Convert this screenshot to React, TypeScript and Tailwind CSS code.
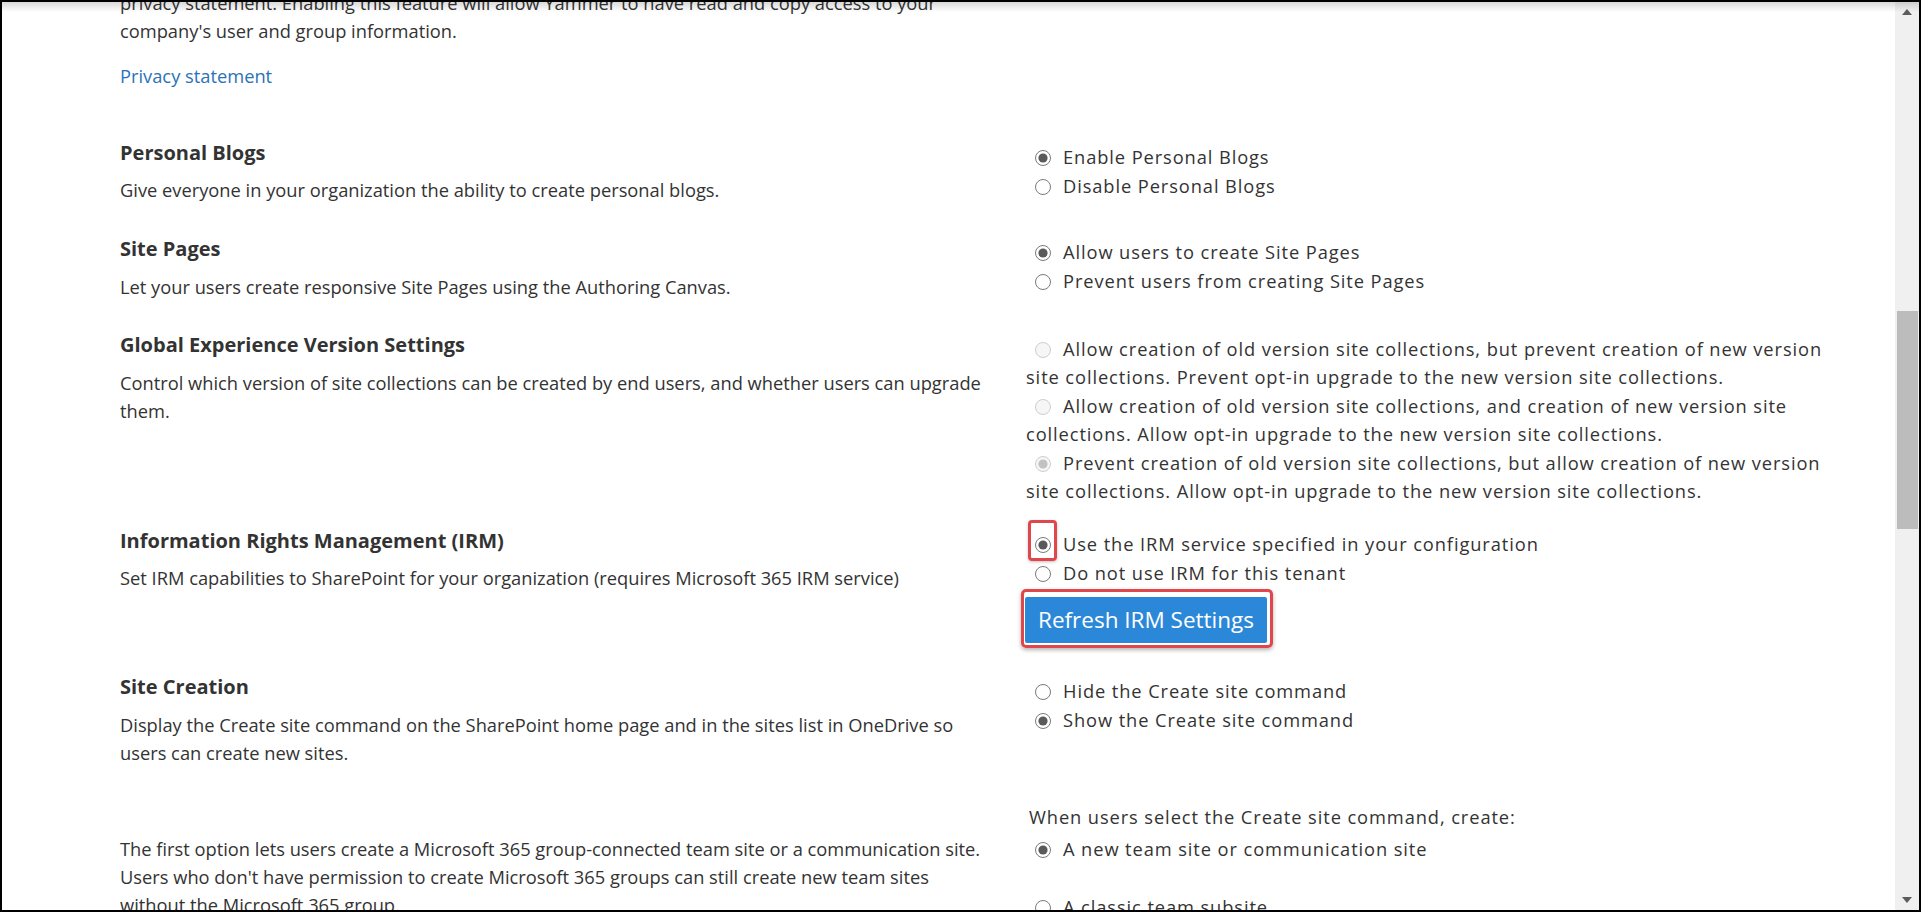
import React from "react";

type RState = "on" | "off" | "don" | "doff";

function Radio({ s }: { s: RState }) {
  const disabled = s === "don" || s === "doff";
  const checked = s === "on" || s === "don";
  return (
    <svg
      width="16"
      height="16"
      viewBox="0 0 16 16"
      className="inline-block align-[-2px]"
    >
      <circle
        cx="8"
        cy="8"
        r="7.5"
        fill={disabled ? "#f6f6f6" : "#ffffff"}
        stroke={disabled ? "#cdcdcd" : "#7a7a7a"}
        strokeWidth="1"
      />
      {checked && <circle cx="8" cy="8" r="4.6" fill={disabled ? "#c2c2c2" : "#5a5a5a"} />}
    </svg>
  );
}

function RadioSlot({ s, boxed }: { s: RState; boxed?: boolean }) {
  return (
    <span className="relative inline-block ml-[9px] mr-[12px] tracking-normal">
      <Radio s={s} />
      {boxed && (
        <span className="absolute top-[-10px] bottom-[-3px] left-[-7px] right-[-6px] border-[3px] border-[#e0474c] rounded-[4px] shadow-[0_1px_3px_rgba(0,0,0,0.25)]" />
      )}
    </span>
  );
}

function Item({ s, children, className, boxed }: { s: RState; children: React.ReactNode; className?: string; boxed?: boolean }) {
  return (
    <div className={"whitespace-nowrap " + (className ?? "")}>
      <RadioSlot s={s} boxed={boxed} />
      {children}
    </div>
  );
}

function Heading({ children }: { children: React.ReactNode }) {
  return <div className="font-bold text-[20px] leading-[28px] text-[#333333]">{children}</div>;
}

export default function App() {
  return (
    <div className="relative w-[1921px] h-[912px] border-2 border-black bg-white overflow-hidden flex font-['Open_Sans',sans-serif] text-[#333333]">
      <div className="flex-1 overflow-hidden">
        <div className="mt-[-13px] pl-[118px] text-[18.3px] leading-[28px]">
          {/* top fragment */}
          <div className="w-[906px] whitespace-nowrap">
            <div>privacy statement. Enabling this feature will allow Yammer to have read and copy access to your</div>
            <div>company's user and group information.</div>
            <div className="mt-[17px] text-[#2b72b8]">Privacy statement</div>
          </div>

          {/* Personal Blogs */}
          <div className="mt-[49px] flex">
            <div className="w-[906px] shrink-0 whitespace-nowrap">
              <Heading>Personal Blogs</Heading>
              <div className="mt-[9px]">Give everyone in your organization the ability to create personal blogs.</div>
            </div>
            <div className="pt-[4px] tracking-[0.9px]">
              <Item s="on">Enable Personal Blogs</Item>
              <Item s="off" className="mt-[1px]">Disable Personal Blogs</Item>
            </div>
          </div>

          {/* Site Pages */}
          <div className="mt-[31px] flex">
            <div className="w-[906px] shrink-0 whitespace-nowrap">
              <Heading>Site Pages</Heading>
              <div className="mt-[10px]">Let your users create responsive Site Pages using the Authoring Canvas.</div>
            </div>
            <div className="pt-[3px] tracking-[0.9px]">
              <Item s="on">Allow users to create Site Pages</Item>
              <Item s="off" className="mt-[1px]">Prevent users from creating Site Pages</Item>
            </div>
          </div>

          {/* Global Experience */}
          <div className="mt-[30px] flex">
            <div className="w-[906px] shrink-0 whitespace-nowrap">
              <Heading>Global Experience Version Settings</Heading>
              <div className="mt-[10px]">
                Control which version of site collections can be created by end users, and whether users can upgrade
                <br />
                them.
              </div>
            </div>
            <div className="pt-[4px] tracking-[0.9px]">
              <Item s="doff">
                Allow creation of old version site collections, but prevent creation of new version
                <br />
                site collections. Prevent opt-in upgrade to the new version site collections.
              </Item>
              <Item s="doff" className="mt-[1px]">
                Allow creation of old version site collections, and creation of new version site
                <br />
                collections. Allow opt-in upgrade to the new version site collections.
              </Item>
              <Item s="don" className="mt-[1px]">
                Prevent creation of old version site collections, but allow creation of new version
                <br />
                site collections. Allow opt-in upgrade to the new version site collections.
              </Item>
            </div>
          </div>

          {/* IRM */}
          <div className="mt-[22px] flex">
            <div className="w-[906px] shrink-0 whitespace-nowrap">
              <Heading>Information Rights Management (IRM)</Heading>
              <div className="mt-[9px]">Set IRM capabilities to SharePoint for your organization (requires Microsoft 365 IRM service)</div>
            </div>
            <div className="pt-[3px] tracking-[0.9px]">
              <Item s="on" boxed>Use the IRM service specified in your configuration</Item>
              <Item s="off" className="mt-[1px]">Do not use IRM for this tenant</Item>
              <div className="mt-[10px] ml-[-1px] relative inline-block tracking-normal">
                <span className="absolute top-[-8px] bottom-[-5px] left-[-4px] right-[-6px] border-[3px] border-[#e0474c] rounded-[5px] shadow-[0_2px_4px_rgba(0,0,0,0.3)]" />
                <button className="relative block h-[46px] w-[242px] bg-[#2b88d8] text-white text-[22.5px] leading-[46px] rounded-[2px] whitespace-nowrap">
                  Refresh IRM Settings
                </button>
              </div>
            </div>
          </div>

          {/* Site Creation */}
          <div className="mt-[30px] flex">
            <div className="w-[906px] shrink-0 whitespace-nowrap">
              <Heading>Site Creation</Heading>
              <div className="mt-[10px]">
                Display the Create site command on the SharePoint home page and in the sites list in OneDrive so
                <br />
                users can create new sites.
              </div>
            </div>
            <div className="pt-[4px] tracking-[0.9px]">
              <Item s="off">Hide the Create site command</Item>
              <Item s="on" className="mt-[1px]">Show the Create site command</Item>
            </div>
          </div>

          {/* Create site choice */}
          <div className="mt-[36px] flex">
            <div className="w-[906px] shrink-0 whitespace-nowrap pt-[32px]">
              <div>The first option lets users create a Microsoft 365 group-connected team site or a communication site.</div>
              <div>Users who don't have permission to create Microsoft 365 groups can still create new team sites</div>
              <div>without the Microsoft 365 group.</div>
            </div>
            <div className="tracking-[0.9px]">
              <div className="pl-[3px] whitespace-nowrap">When users select the Create site command, create:</div>
              <Item s="on" className="mt-[4px]">A new team site or communication site</Item>
              <Item s="off" className="mt-[30px]">A classic team subsite</Item>
            </div>
          </div>
        </div>
      </div>

      {/* scrollbar */}
      <div className="w-[24px] shrink-0 bg-[#f0f0f0] flex flex-col">
        <div className="h-[20px] flex items-center justify-center">
          <svg width="10" height="6" viewBox="0 0 10 6">
            <polygon points="5,0 10,6 0,6" fill="#5c5c5c" />
          </svg>
        </div>
        <div className="flex-1">
          <div className="mt-[289px] ml-[2px] mr-[1px] h-[218px] bg-[#bcbcbc]" />
        </div>
        <div className="h-[20px] flex items-center justify-center">
          <svg width="10" height="6" viewBox="0 0 10 6">
            <polygon points="0,0 10,0 5,6" fill="#5c5c5c" />
          </svg>
        </div>
      </div>

      {/* top inner shadow */}
      <div className="pointer-events-none absolute top-0 left-0 right-0 h-[10px] bg-gradient-to-b from-black/15 to-transparent" />
    </div>
  );
}
